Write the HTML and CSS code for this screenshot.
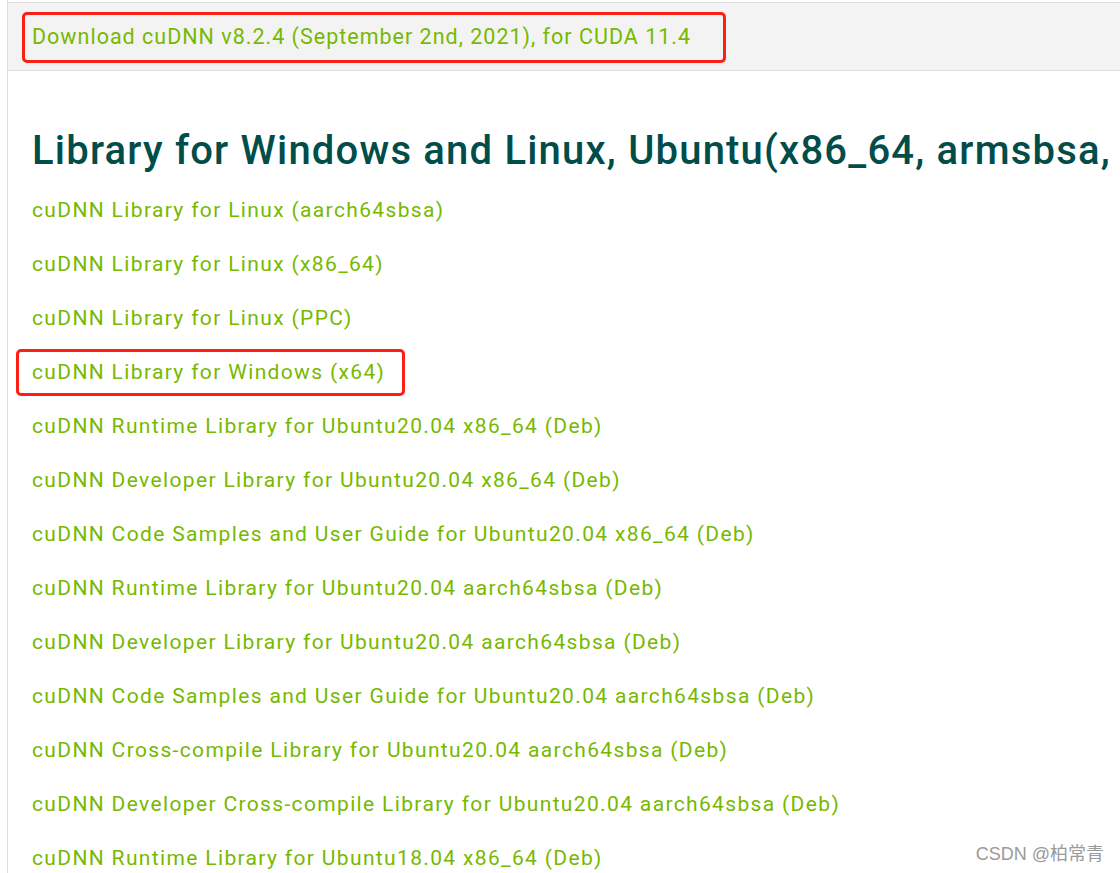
FILE: index.html
```html
<!DOCTYPE html>
<html lang="en">
<head>
<meta charset="utf-8">
<title>cuDNN Download</title>
<link rel="stylesheet" href="styles.css">
</head>
<body>
<div class="page">
  <div class="topbar">
    <a class="release boxed" href="#">Download cuDNN v8.2.4 (September 2nd, 2021), for CUDA 11.4</a>
  </div>
  <div class="content">
    <h3 class="heading">Library for Windows and Linux, Ubuntu(x86_64, armsbsa,</h3>
    <ul class="links">
      <li><a href="#">cuDNN Library for Linux (aarch64sbsa)</a></li>
      <li><a href="#">cuDNN Library for Linux (x86_64)</a></li>
      <li><a href="#">cuDNN Library for Linux (PPC)</a></li>
      <li><a class="boxed win" href="#">cuDNN Library for Windows (x64)</a></li>
      <li><a href="#">cuDNN Runtime Library for Ubuntu20.04 x86_64 (Deb)</a></li>
      <li><a href="#">cuDNN Developer Library for Ubuntu20.04 x86_64 (Deb)</a></li>
      <li><a href="#">cuDNN Code Samples and User Guide for Ubuntu20.04 x86_64 (Deb)</a></li>
      <li><a href="#">cuDNN Runtime Library for Ubuntu20.04 aarch64sbsa (Deb)</a></li>
      <li><a href="#">cuDNN Developer Library for Ubuntu20.04 aarch64sbsa (Deb)</a></li>
      <li><a href="#">cuDNN Code Samples and User Guide for Ubuntu20.04 aarch64sbsa (Deb)</a></li>
      <li><a href="#">cuDNN Cross-compile Library for Ubuntu20.04 aarch64sbsa (Deb)</a></li>
      <li><a href="#">cuDNN Developer Cross-compile Library for Ubuntu20.04 aarch64sbsa (Deb)</a></li>
      <li><a href="#">cuDNN Runtime Library for Ubuntu18.04 x86_64 (Deb)</a></li>
    </ul>
  </div>
</div>
<div class="watermark">CSDN @柏常青</div>
</body>
</html>
```
FILE: styles.css
```css
html, body {
  margin: 0;
  padding: 0;
  background: #ffffff;
  height: 873px;
  overflow: hidden;
}
body {
  font-family: Roboto, "Liberation Sans", sans-serif;
  position: relative;
}
.page {
  margin-left: 7px;
  padding-top: 2px;
  border-left: 1px solid #dddddd;
  min-height: 900px;
}
.topbar {
  background: #f3f3f3;
  border-top: 1px solid #dcdcdc;
  border-bottom: 1px solid #dcdcdc;
  padding: 9px 0 7px 14px;
}
.boxed {
  border: 3px solid #fc1f13;
  border-radius: 5px;
  box-sizing: border-box;
}
.release {
  display: block;
  width: 704px;
  height: 51px;
  padding-left: 7px;
  font-size: 21.5px;
  letter-spacing: 1px;
  line-height: 44px;
  color: #76b900;
  text-decoration: none;
  white-space: nowrap;
}
.content {
  padding-left: 24px;
}
.heading {
  margin: 56px 0 8px 0;
  font-size: 40px;
  line-height: 48px;
  letter-spacing: 1.2px;
  font-weight: 500;
  color: #004d4a;
  white-space: nowrap;
}
.links {
  list-style: none;
  margin: 0;
  padding: 0;
}
.links li {
  font-size: 21px;
  letter-spacing: 1.35px;
  line-height: 54px;
  white-space: nowrap;
}
.links a {
  color: #76b900;
  text-decoration: none;
}
.links a.win {
  display: inline-block;
  height: 47px;
  line-height: 41px;
  margin-left: -16px;
  padding: 0 17px 0 13px;
}
.watermark {
  position: absolute;
  right: 16px;
  bottom: 8px;
  font-family: "Liberation Sans", "Noto Sans CJK SC", sans-serif;
  font-size: 18px;
  color: #9a9a9a;
  text-shadow: 0 0 2px #ffffff;
}
```
